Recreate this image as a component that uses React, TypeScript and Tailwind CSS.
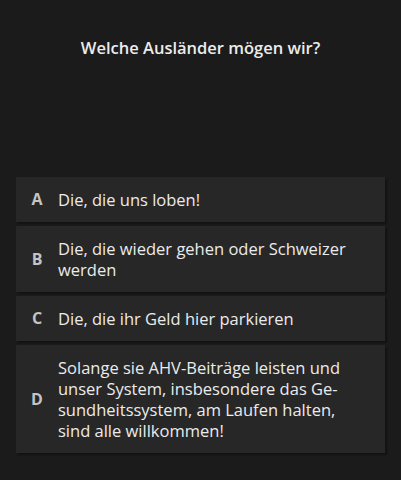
import React from 'react';

const options = [
  { key: 'A', text: 'Die, die uns loben!' },
  { key: 'B', text: 'Die, die wieder gehen oder Schweizer werden' },
  { key: 'C', text: 'Die, die ihr Geld hier parkieren' },
  { key: 'D', text: 'Solange sie AHV-Beiträge leisten und unser System, insbesondere das Ge\u00ADsundheitssystem, am Laufen halten, sind alle willkommen!' },
];

export default function App() {
  return (
    <div className="w-[401px] h-[480px] bg-[#1b1b1b] px-4 font-['Open_Sans','Noto_Sans',sans-serif] overflow-hidden">
      <h1 className="pt-[37px] text-center text-[16.5px] font-semibold text-[#ececec] leading-[22px]">
        Welche Ausländer mögen wir?
      </h1>

      <div className="mt-[118px] flex flex-col gap-1">
        {options.map((o) => (
          <div
            key={o.key}
            className="flex items-center bg-[#272727] py-3 shadow-[2px_2px_2px_rgba(0,0,0,0.35)]"
          >
            <span className="w-[42px] shrink-0 text-center text-[16px] leading-[21px] font-bold text-[#c4c4c4]">{o.key}</span>
            <span className="pr-6 text-[16.5px] leading-[21px] text-[#ebebeb]">{o.text}</span>
          </div>
        ))}
      </div>
    </div>
  );
}
